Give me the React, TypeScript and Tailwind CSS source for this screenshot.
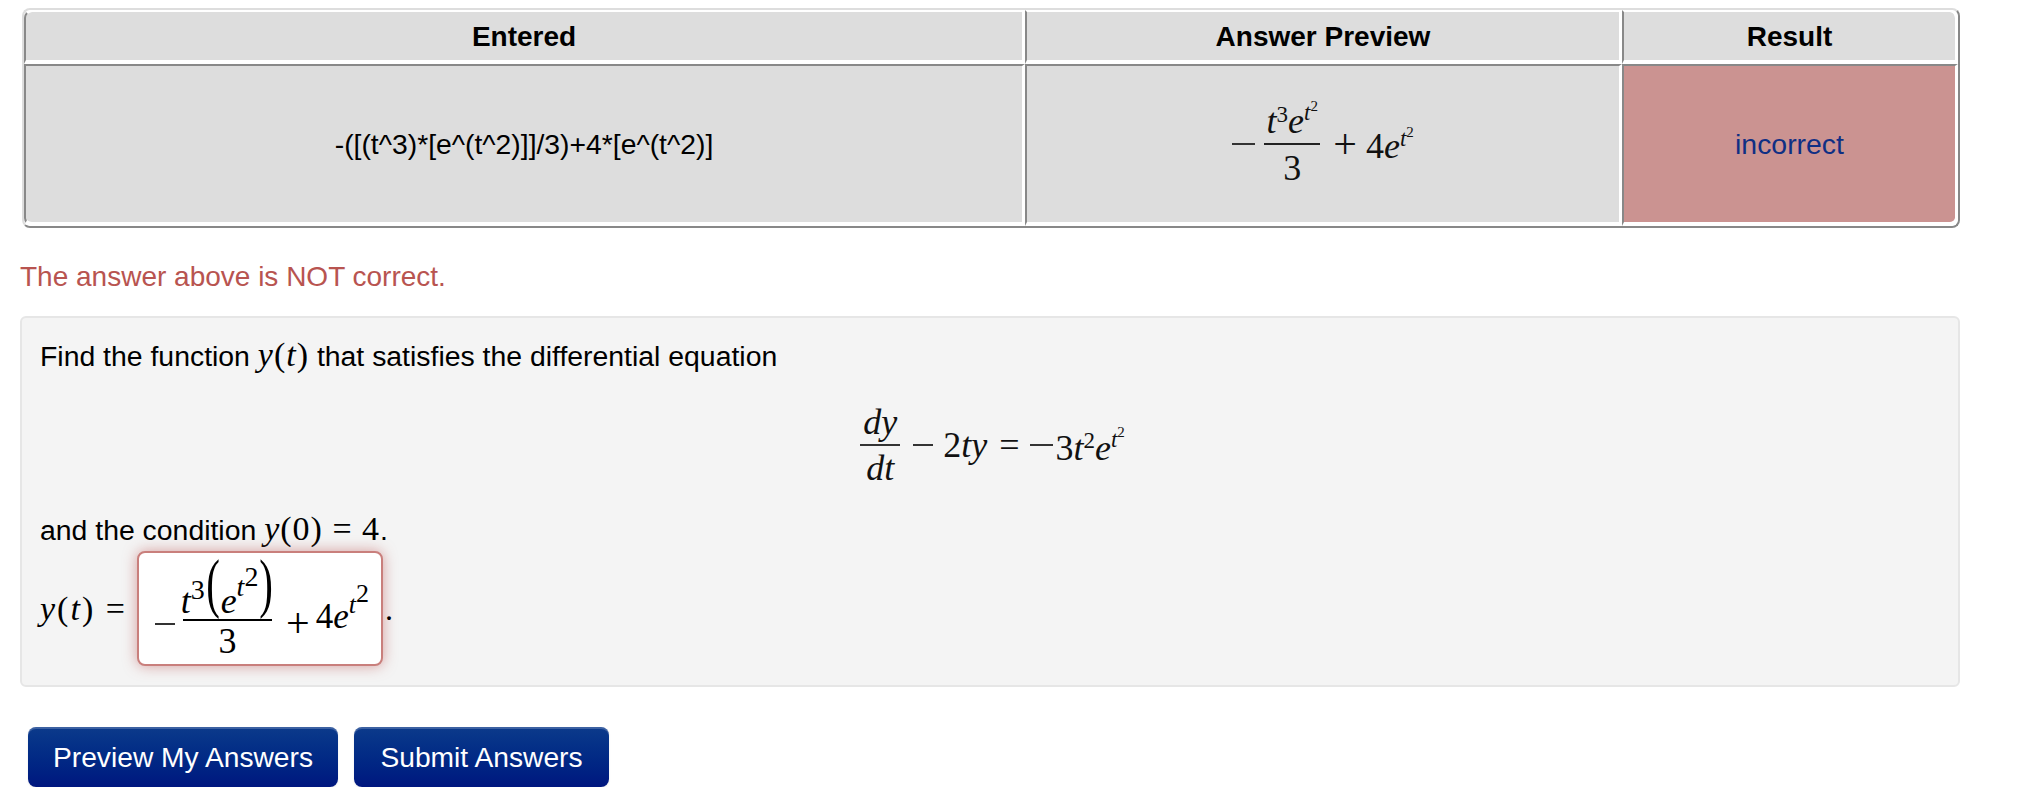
import React from 'react';

const sans = "font-['Liberation_Sans',Arial,sans-serif]";
const serif = "font-['Liberation_Serif','Times_New_Roman',serif]";

const V: React.FC<{ children: React.ReactNode }> = ({ children }) => <i className="italic">{children}</i>;

const cell = 'border-l-2 border-l-[#888] border-r-[3px] border-r-white bg-[#ddd] bg-clip-padding text-center p-0 align-middle';

const PreviewMath = () => (
  <div className={`inline-flex items-center h-[120px] text-[#111] text-[36px] ${serif}`}>
    <span className="w-[23px] h-[2px] bg-[#333]" />
    <span className="ml-[9px] w-[56px] flex flex-col items-center">
      <span className="h-[50px] flex items-end pb-[4px] leading-none whitespace-nowrap">
        <V>t</V>
        <span className="text-[23px] mb-[13px] leading-none">3</span>
        <V>e</V>
        <span className="text-[23px] italic mb-[15px] leading-none">t</span>
        <span className="text-[15px] mb-[25px] leading-none">2</span>
      </span>
      <span className="w-full h-[2px] bg-[#222]" />
      <span className="h-[50px] flex items-center pb-[4px] leading-none">3</span>
    </span>
    <span className="ml-[13px] text-[42px] leading-none">+</span>
    <span className="ml-[9px] flex items-end leading-none whitespace-nowrap">
      4<V>e</V>
      <span className="text-[23px] italic mb-[14px] leading-none">t</span>
      <span className="text-[15px] mb-[24px] leading-none">2</span>
    </span>
  </div>
);

const DiffEquation = () => (
  <div className={`h-[90px] flex items-center justify-center text-[36px] text-[#111] pr-[13px] ${serif}`}>
    <span className="w-[40px] flex flex-col items-center">
      <span className="h-[44px] leading-none flex items-center italic">dy</span>
      <span className="w-full h-[2px] bg-[#333]" />
      <span className="h-[44px] leading-none flex items-center italic">dt</span>
    </span>
    <span className="ml-[13px] w-[20px] h-[2px] bg-[#333]" />
    <span className="ml-[10px] leading-none whitespace-nowrap">
      2<V>ty</V>
    </span>
    <span className="ml-[12px] leading-none">=</span>
    <span className="ml-[11px] w-[23px] h-[2px] bg-[#333]" />
    <span className="ml-[2px] flex items-end leading-none whitespace-nowrap">
      3<V>t</V>
      <span className="text-[23px] mb-[14px] leading-none">2</span>
      <V>e</V>
      <span className="text-[23px] italic mb-[15px] leading-none">t</span>
      <span className="text-[15px] mb-[26px] leading-none">2</span>
    </span>
  </div>
);

const InputMath = () => (
  <div className={`h-full flex items-start text-[36px] text-black pl-[16px] ${serif}`}>
    <span className="mt-[70px] w-[20px] h-[2px] bg-[#333]" />
    <span className="ml-[8px] w-[89px] flex flex-col items-center">
      <span className="h-[66px] flex items-end whitespace-nowrap leading-none">
        <V>t</V>
        <span className="text-[28px] mb-[15px] leading-none">3</span>
        <span className="text-[66px] font-light mb-[3px] leading-none scale-x-[0.62] -mx-[3px]">(</span>
        <V>e</V>
        <span className="text-[28px] italic mb-[18px] leading-none">t</span>
        <span className="text-[28px] mb-[28px] leading-none">2</span>
        <span className="text-[66px] font-light mb-[3px] leading-none scale-x-[0.62] -mx-[3px]">)</span>
      </span>
      <span className="w-full h-[2px] bg-black" />
      <span className="leading-none mt-[2px]">3</span>
    </span>
    <span className="ml-[14px] mt-[49px] text-[42px] leading-none">+</span>
    <span className="ml-[6px] mt-[28px] flex items-end text-[35px] leading-none whitespace-nowrap">
      4<V>e</V>
      <span className="text-[26px] italic mb-[16px] leading-none">t</span>
      <span className="text-[26px] mb-[27px] leading-none">2</span>
    </span>
  </div>
);

export default function App() {
  return (
    <div className={`w-[1960px] pl-5 pt-2 bg-white text-black ${sans}`}>
      <div className="ml-[2px]">
        <table className="w-[1938px] table-fixed border-separate border-spacing-0 border-2 border-t-[#ddd] border-l-[#ddd] border-r-[#888] border-b-[#888] rounded-[8px]">
          <colgroup>
            <col className="w-[1001px]" />
            <col className="w-[597px]" />
            <col className="w-[336px]" />
          </colgroup>
          <thead>
            <tr>
              {['Entered', 'Answer Preview', 'Result'].map((h, i) => (
                <th
                  key={h}
                  className={`${cell} !pt-[2px] h-[54px] border-t-2 border-t-white border-b-4 border-b-white text-[28px] font-bold ${i === 0 ? 'rounded-tl-[8px]' : ''} ${i === 2 ? 'rounded-tr-[8px]' : ''}`}
                >
                  {h}
                </th>
              ))}
            </tr>
          </thead>
          <tbody>
            <tr>
              <td className={`${cell} !pt-[1px] h-[162px] border-t-2 border-t-[#888] border-b-4 border-b-white text-[28.3px] rounded-bl-[8px]`}>
                {'-([(t^3)*[e^(t^2)]]/3)+4*[e^(t^2)]'}
              </td>
              <td className={`${cell} h-[162px] border-t-2 border-t-[#888] border-b-4 border-b-white`}>
                <PreviewMath />
              </td>
              <td className={`${cell} !pt-[1px] !bg-[#cb9391] h-[162px] border-t-2 border-t-[#888] border-b-4 border-b-white text-[28.4px] text-[#0f2f84] rounded-br-[8px]`}>
                incorrect
              </td>
            </tr>
          </tbody>
        </table>
      </div>

      <p className="mt-[29px] h-10 leading-10 text-[28px] text-[#b85450]">The answer above is NOT correct.</p>

      <div className="mt-[19px] w-[1940px] border-2 border-[#e6e6e6] rounded-[6px] bg-[#f4f4f4] pt-[17px] pb-[19px] pl-[18px] text-[28.4px]">
        <p className="h-10 leading-10 flex items-baseline">
          Find the function&nbsp;
          <span className={`text-[34px] tracking-[1px] ${serif}`}>
            <V>y</V>(<V>t</V>)
          </span>
          &nbsp;that satisfies the differential equation
        </p>
        <div className="mt-[25px]">
          <DiffEquation />
        </div>
        <p className="mt-[19px] h-10 leading-10 flex items-baseline">
          and the condition&nbsp;
          <span className={`text-[34px] tracking-[1px] ${serif}`}>
            <V>y</V>(0) = 4
          </span>
          .
        </p>
        <div className="mt-[2px] h-[115px] flex items-center">
          <span className={`w-[97px] text-[34px] tracking-[2px] whitespace-nowrap ${serif}`}>
            <V>y</V>(<V>t</V>) =
          </span>
          <div className="w-[246px] h-[115px] bg-white border-2 border-[#c97f7c] rounded-[8px] shadow-[0_0_14px_rgba(185,74,72,0.5)]">
            <InputMath />
          </div>
          <span className={`ml-[2px] text-[32px] ${serif}`}>.</span>
        </div>
      </div>

      <div className="mt-[40px] ml-2 flex gap-4">
        <button className="w-[310px] h-[60px] pt-[1px] rounded-[8px] bg-gradient-to-b from-[#0c3a8b] to-[#00167f] shadow-[inset_0_2px_0_rgba(255,255,255,0.2),0_1px_2px_rgba(0,0,0,0.1)] text-white text-[28.2px]">
          Preview My Answers
        </button>
        <button className="w-[255px] h-[60px] pt-[1px] rounded-[8px] bg-gradient-to-b from-[#0c3a8b] to-[#00167f] shadow-[inset_0_2px_0_rgba(255,255,255,0.2),0_1px_2px_rgba(0,0,0,0.1)] text-white text-[28.2px]">
          Submit Answers
        </button>
      </div>
    </div>
  );
}
